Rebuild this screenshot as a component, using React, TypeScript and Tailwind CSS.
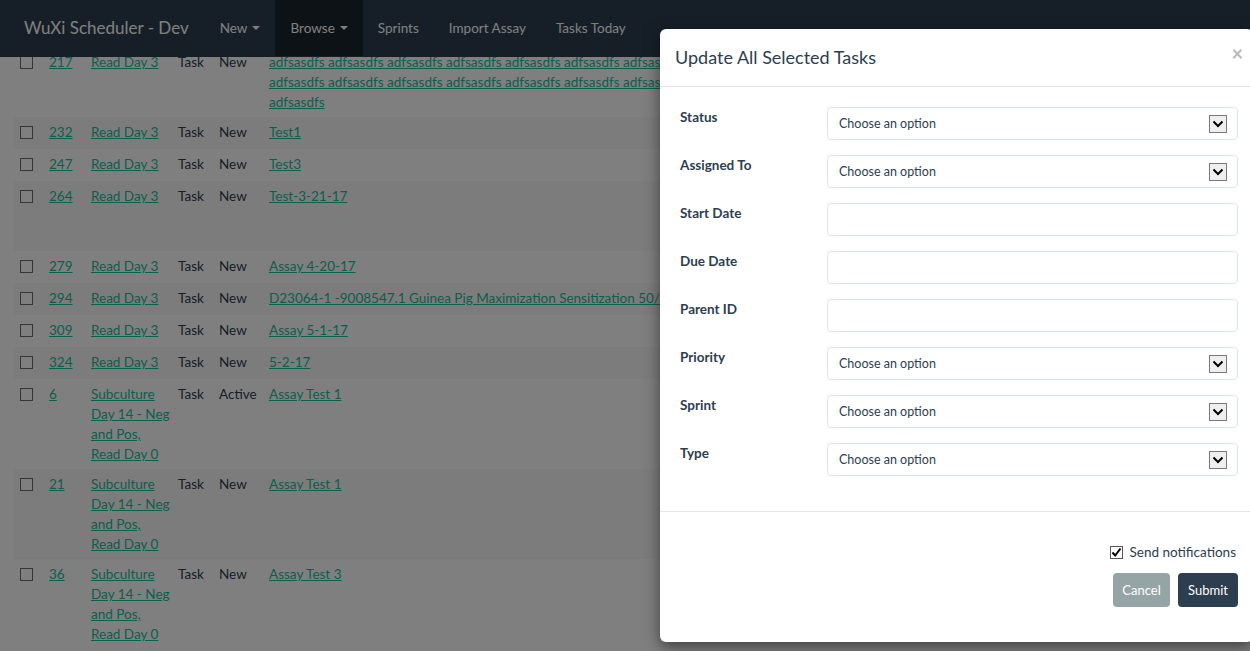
import React from "react";

const font = { fontFamily: "Lato, 'Liberation Sans', sans-serif" };

type Row = {
  id: string;
  name: string[];
  type: string;
  status: string;
  desc: React.ReactNode;
  h: string;
  striped: boolean;
};

const word = "adfsasdfs";
const line = (n: number) => Array.from({ length: n }, () => word).join(" ");

const rows: Row[] = [
  {
    id: "217",
    name: ["Read Day 3"],
    type: "Task",
    status: "New",
    desc: (
      <>
        <span className="block whitespace-nowrap">{line(16)}</span>
        <span className="block whitespace-nowrap">{line(16)}</span>
        <span className="block whitespace-nowrap">{word}</span>
      </>
    ),
    h: "h-[70px]",
    striped: false,
  },
  { id: "232", name: ["Read Day 3"], type: "Task", status: "New", desc: "Test1", h: "h-[32px]", striped: true },
  { id: "247", name: ["Read Day 3"], type: "Task", status: "New", desc: "Test3", h: "h-[32px]", striped: false },
  { id: "264", name: ["Read Day 3"], type: "Task", status: "New", desc: "Test-3-21-17", h: "h-[70px]", striped: true },
  { id: "279", name: ["Read Day 3"], type: "Task", status: "New", desc: "Assay 4-20-17", h: "h-[32px]", striped: false },
  {
    id: "294",
    name: ["Read Day 3"],
    type: "Task",
    status: "New",
    desc: "D23064-1 -9008547.1 Guinea Pig Maximization Sensitization 50/72 (Dermal)",
    h: "h-[32px]",
    striped: true,
  },
  { id: "309", name: ["Read Day 3"], type: "Task", status: "New", desc: "Assay 5-1-17", h: "h-[32px]", striped: false },
  { id: "324", name: ["Read Day 3"], type: "Task", status: "New", desc: "5-2-17", h: "h-[32px]", striped: true },
  {
    id: "6",
    name: ["Subculture", "Day 14 - Neg", "and Pos,", "Read Day 0"],
    type: "Task",
    status: "Active",
    desc: "Assay Test 1",
    h: "h-[90px]",
    striped: false,
  },
  {
    id: "21",
    name: ["Subculture", "Day 14 - Neg", "and Pos,", "Read Day 0"],
    type: "Task",
    status: "New",
    desc: "Assay Test 1",
    h: "h-[90px]",
    striped: true,
  },
  {
    id: "36",
    name: ["Subculture", "Day 14 - Neg", "and Pos,", "Read Day 0"],
    type: "Task",
    status: "New",
    desc: "Assay Test 3",
    h: "h-[90px]",
    striped: false,
  },
];

function Caret() {
  return (
    <span className="ml-[5px] inline-block h-0 w-0 border-x-[4px] border-t-[4px] border-x-transparent border-t-white align-middle" />
  );
}

function SelectBox() {
  return (
    <div className="flex h-[33px] items-center justify-between rounded-[4px] border border-[#dce4ec] bg-white pl-[11px] pr-[10px] text-[12.5px] text-[#2c3e50]">
      <span>Choose an option</span>
      <span className="flex h-[18px] w-[18px] items-center justify-center border border-[#7a7a7a] bg-[#efefef]">
        <svg width="12" height="8" viewBox="0 0 12 8">
          <path d="M1.5 1.5 L6 6 L10.5 1.5" fill="none" stroke="#000" strokeWidth="2" />
        </svg>
      </span>
    </div>
  );
}

function InputBox() {
  return <div className="h-[33px] rounded-[4px] border border-[#dce4ec] bg-white" />;
}

const fields: { label: string; kind: "select" | "input" }[] = [
  { label: "Status", kind: "select" },
  { label: "Assigned To", kind: "select" },
  { label: "Start Date", kind: "input" },
  { label: "Due Date", kind: "input" },
  { label: "Parent ID", kind: "input" },
  { label: "Priority", kind: "select" },
  { label: "Sprint", kind: "select" },
  { label: "Type", kind: "select" },
];

export default function App() {
  return (
    <div className="relative h-[651px] w-[1250px] overflow-hidden bg-white text-[13.5px] leading-[20px] text-[#2c3e50]" style={font}>
      {/* page content (scrolled table) */}
      <div className="pl-[14px] pt-[47px]">
        {rows.map((r) => (
          <div
            key={r.id}
            className={`grid grid-cols-[30px_42px_87px_41px_50px_1fr] ${r.h} ${r.striped ? "bg-[#f9f9f9]" : "bg-white"}`}
          >
            <div className="px-[5px] py-[5px]">
              <span className="ml-[1px] mt-[4px] block h-[13px] w-[13px] border border-[#6b6b6b] bg-white" />
            </div>
            <div className="px-[5px] py-[5px]">
              <a className="text-[#18bc9c] underline">{r.id}</a>
            </div>
            <div className="px-[5px] py-[5px]">
              {r.name.map((n, i) => (
                <a key={i} className="block whitespace-nowrap text-[#18bc9c] underline">
                  {n}
                </a>
              ))}
            </div>
            <div className="px-[5px] py-[5px]">{r.type}</div>
            <div className="px-[5px] py-[5px]">{r.status}</div>
            <div className="overflow-hidden px-[5px] py-[5px]">
              <a className="block whitespace-nowrap text-[#18bc9c] underline">{r.desc}</a>
            </div>
          </div>
        ))}
      </div>

      {/* fixed navbar */}
      <div className="absolute left-0 right-0 top-0 flex h-[57px] items-stretch bg-[#2c3e50] text-white">
        <div className="flex items-center pb-[1px] pl-[24px] pr-[16px] text-[17px]">WuXi Scheduler - Dev</div>
        <div className="flex items-stretch pb-[1px] text-[13.5px]">
          <div className="flex items-center px-[15px]">
            New
            <Caret />
          </div>
          <div className="flex items-center bg-[#1a242f] px-[15px]">
            Browse
            <Caret />
          </div>
          <div className="flex items-center px-[15px]">Sprints</div>
          <div className="flex items-center px-[15px]">Import Assay</div>
          <div className="flex items-center px-[15px]">Tasks Today</div>
        </div>
      </div>

      {/* backdrop */}
      <div className="absolute inset-0 bg-black/50" />

      {/* modal */}
      <div className="absolute left-[660px] top-[29px] w-[593px] rounded-[6px] bg-white shadow-[0_5px_15px_rgba(0,0,0,0.5)]">
        <div className="flex h-[58px] items-center justify-between border-b border-[#e5e5e5] pb-[2px] pl-[15px] pr-[10px]">
          <h4 className="text-[18px] text-[#2c3e50]">Update All Selected Tasks</h4>
          <span className="-mt-[8px] text-[20px] font-bold text-[#b8b8b8]">×</span>
        </div>
        <div className="flex flex-col gap-[15px] pb-[35px] pl-[20px] pr-[15px] pt-[20px]">
          {fields.map((f) => (
            <div key={f.label} className="grid grid-cols-[147px_1fr]">
              <label className="text-[13.5px] font-bold leading-[20px] text-[#2c3e50]">{f.label}</label>
              {f.kind === "select" ? <SelectBox /> : <InputBox />}
            </div>
          ))}
        </div>
        <div className="flex flex-col items-end border-t border-[#e5e5e5] pb-[35px] pr-[15px] pt-[30px]">
          <div className="flex items-center gap-[7px] text-[13.5px] leading-[20px] text-[#2c3e50]">
            <span className="flex h-[13px] w-[13px] items-center justify-center border border-[#555] bg-white">
              <svg width="11" height="11" viewBox="0 0 11 11">
                <path d="M1.5 5.5 L4.2 8.5 L9.5 1.5" fill="none" stroke="#000" strokeWidth="2" />
              </svg>
            </span>
            <span className="mr-[2px]">Send notifications</span>
          </div>
          <div className="mt-[11px] flex gap-[8px]">
            <button className="flex h-[34px] w-[57px] items-center justify-center rounded-[4px] bg-[#95a5a6] text-[13px] text-white">
              Cancel
            </button>
            <button className="flex h-[34px] w-[60px] items-center justify-center rounded-[4px] bg-[#2c3e50] text-[13px] text-white">
              Submit
            </button>
          </div>
        </div>
      </div>
    </div>
  );
}
